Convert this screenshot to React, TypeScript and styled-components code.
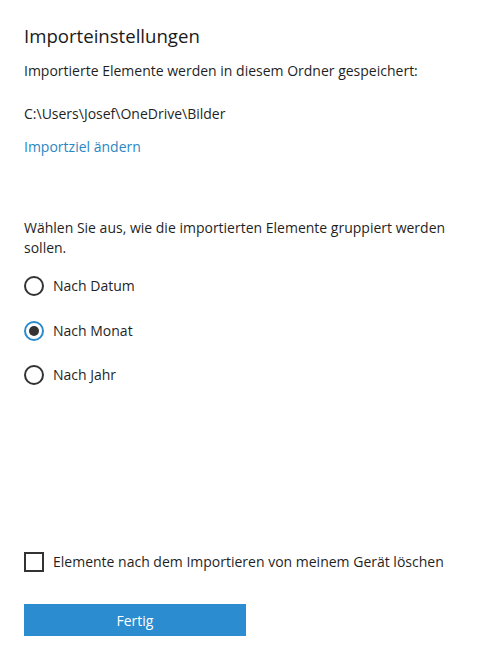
import React, { useState } from "react";
import styled, { createGlobalStyle } from "styled-components";

const Global = createGlobalStyle`
  html, body { margin: 0; padding: 0; background: #ffffff; }
  body { font-family: "Segoe UI", "Open Sans", "Noto Sans", sans-serif; color: #1f1f1f; }
`;

const Page = styled.div`
  width: 490px;
  height: 658px;
  box-sizing: border-box;
  padding: 22px 24px 0 24px;
  display: flex;
  flex-direction: column;
`;

const Title = styled.h1`
  margin: 0;
  font-size: 18.6px;
  font-weight: 400;
  line-height: 28px;
  color: #1a1a1a;
`;

const Text = styled.p<{ $mt: number }>`
  margin: ${(p) => p.$mt}px 0 0 0;
  font-size: 14px;
  line-height: 20px;
  color: #1f1f1f;
`;

const Link = styled.a`
  margin-top: 13px;
  font-size: 14px;
  line-height: 20px;
  color: #2b87c2;
  text-decoration: none;
  cursor: pointer;
`;

const RadioGroup = styled.div`
  margin-top: 18px;
  display: flex;
  flex-direction: column;
  gap: 24.5px;
`;

const Row = styled.label`
  display: flex;
  align-items: center;
  gap: 9px;
  font-size: 14px;
  line-height: 20px;
  cursor: pointer;
`;

const RadioCircle = styled.span<{ $checked: boolean }>`
  width: 20px;
  height: 20px;
  box-sizing: border-box;
  border-radius: 50%;
  border: 2px solid ${(p) => (p.$checked ? "#2b8ccc" : "#333333")};
  display: flex;
  align-items: center;
  justify-content: center;
  &::after {
    content: "";
    width: 10px;
    height: 10px;
    border-radius: 50%;
    background: #333333;
    display: ${(p) => (p.$checked ? "block" : "none")};
  }
`;

const Spacer = styled.div`
  flex: 1;
`;

const CheckBox = styled.span`
  width: 20px;
  height: 20px;
  box-sizing: border-box;
  border: 2px solid #333333;
`;

const Button = styled.button`
  margin-top: 32px;
  margin-bottom: 22px;
  width: 222px;
  height: 32px;
  border: none;
  background: #2b8ccf;
  color: #ffffff;
  font-family: inherit;
  font-size: 14px;
  cursor: pointer;
`;

const options = ["Nach Datum", "Nach Monat", "Nach Jahr"];

export default function App() {
  const [sel, setSel] = useState("Nach Monat");
  return (
    <>
      <Global />
      <Page>
        <Title>Importeinstellungen</Title>
        <Text $mt={11}>Importierte Elemente werden in diesem Ordner gespeichert:</Text>
        <Text $mt={23}>C:\Users\Josef\OneDrive\Bilder</Text>
        <Link>Importziel ändern</Link>
        <Text $mt={61}>
          Wählen Sie aus, wie die importierten Elemente gruppiert werden sollen.
        </Text>
        <RadioGroup>
          {options.map((o) => (
            <Row key={o} onClick={() => setSel(o)}>
              <RadioCircle $checked={sel === o} />
              {o}
            </Row>
          ))}
        </RadioGroup>
        <Spacer />
        <Row>
          <CheckBox />
          Elemente nach dem Importieren von meinem Gerät löschen
        </Row>
        <Button>Fertig</Button>
      </Page>
    </>
  );
}
